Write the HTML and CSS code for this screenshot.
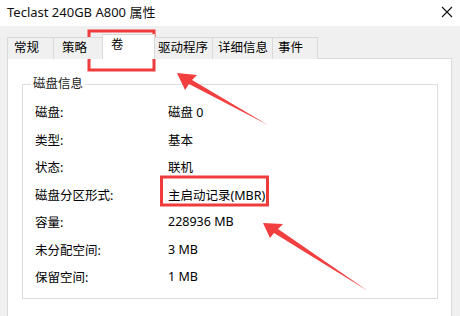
FILE: index.html
```html
<!DOCTYPE html>
<html lang="zh-CN">
<head>
<meta charset="utf-8">
<title>属性</title>
<link rel="stylesheet" href="styles.css">
</head>
<body>
<div class="window">
  <div class="titlebar">
    <span class="title">Teclast 240GB A800 属性</span>
    <svg class="close" width="12" height="12" viewBox="0 0 12 12"><path d="M1 1L11 11M11 1L1 11" stroke="#111" stroke-width="1.1" fill="none"/></svg>
  </div>
  <div class="body">
    <div class="tabs">
      <div class="tab t1">常规</div>
      <div class="tab t2">策略</div>
      <div class="tab t3 active">卷</div>
      <div class="tab t4">驱动程序</div>
      <div class="tab t5">详细信息</div>
      <div class="tab t6">事件</div>
    </div>
    <div class="panel">
      <fieldset class="group">
        <legend>磁盘信息</legend>
        <div class="row"><span class="label">磁盘:</span><span class="value">磁盘 0</span></div>
        <div class="row"><span class="label">类型:</span><span class="value">基本</span></div>
        <div class="row"><span class="label">状态:</span><span class="value">联机</span></div>
        <div class="row"><span class="label">磁盘分区形式:</span><span class="value">主启动记录(MBR)</span></div>
        <div class="row"><span class="label">容量:</span><span class="value">228936 MB</span></div>
        <div class="row"><span class="label">未分配空间:</span><span class="value">3 MB</span></div>
        <div class="row"><span class="label">保留空间:</span><span class="value">1 MB</span></div>
      </fieldset>
    </div>
  </div>
</div>
<svg class="annot" width="460" height="316" viewBox="0 0 460 316">
  <rect x="89" y="31" width="65" height="39" fill="none" stroke="#ef3b3b" stroke-width="3"/>
  <rect x="161.5" y="177" width="106" height="28" fill="none" stroke="#ef3b3b" stroke-width="3"/>
  <polygon points="177,73 197,75 192,80 268,125 189,84 185,90" fill="#f23e3e"/>
  <polygon points="263,223 283,224 278,229 368,291 274,233 270,238" fill="#f23e3e"/>
</svg>
</body>
</html>
```
FILE: styles.css
```css
html, body {
  margin: 0;
  padding: 0;
}
body {
  width: 460px;
  height: 316px;
  overflow: hidden;
  background: #f0f0f0;
  font-family: "Noto Sans", "Noto Sans CJK SC", sans-serif;
  color: #000;
  position: relative;
}
.window {
  width: 460px;
  height: 316px;
  display: flex;
  flex-direction: column;
}
.titlebar {
  height: 26px;
  background: #fff;
  display: flex;
  align-items: center;
  justify-content: space-between;
  padding: 0 7px 2px 7px;
  box-sizing: border-box;
}
.title {
  font-size: 13px;
  line-height: 18px;
  color: #111;
}
.close {
  display: block;
}
.body {
  flex: 1;
  padding: 9px 8px 0 7px;
  display: flex;
  flex-direction: column;
}
.tabs {
  display: flex;
  height: 24px;
  align-items: flex-end;
  position: relative;
  z-index: 1;
  margin-bottom: -1px;
}
.tab {
  height: 22px;
  box-sizing: border-box;
  border: 1px solid #d9d9d9;
  border-bottom: none;
  margin-right: -1px;
  background: #f0f0f0;
  font-size: 12.5px;
  line-height: 20px;
  padding-left: 6px;
  white-space: nowrap;
}
.t1 { width: 47px; }
.t2 { width: 50px; padding-left: 8px; }
.t3 { width: 53px; padding-left: 8px; }
.t4 { width: 59px; padding-left: 3px; }
.t5 { width: 61px; padding-left: 5px; }
.t6 { width: 46px; padding-left: 5px; }
.tab.active {
  height: 25px;
  background: #fff;
  line-height: 20px;
}
.panel {
  flex: 1;
  background: #fff;
  border: 1px solid #d9d9d9;
  border-bottom: none;
  padding: 17px 13px 0 14px;
}
.group {
  margin: 0;
  border: 1px solid #dcdcdc;
  padding: 6px 0 8px 12px;
  height: 223px;
  box-sizing: border-box;
}
.group legend {
  font-size: 12.5px;
  line-height: 16px;
  padding: 0 2px;
  margin-left: -4px;
  color: #222;
}
.row {
  display: flex;
  height: 27.5px;
  align-items: center;
  font-size: 12.5px;
}
.label {
  width: 133px;
}
.annot {
  position: absolute;
  left: 0;
  top: 0;
  pointer-events: none;
}
```
